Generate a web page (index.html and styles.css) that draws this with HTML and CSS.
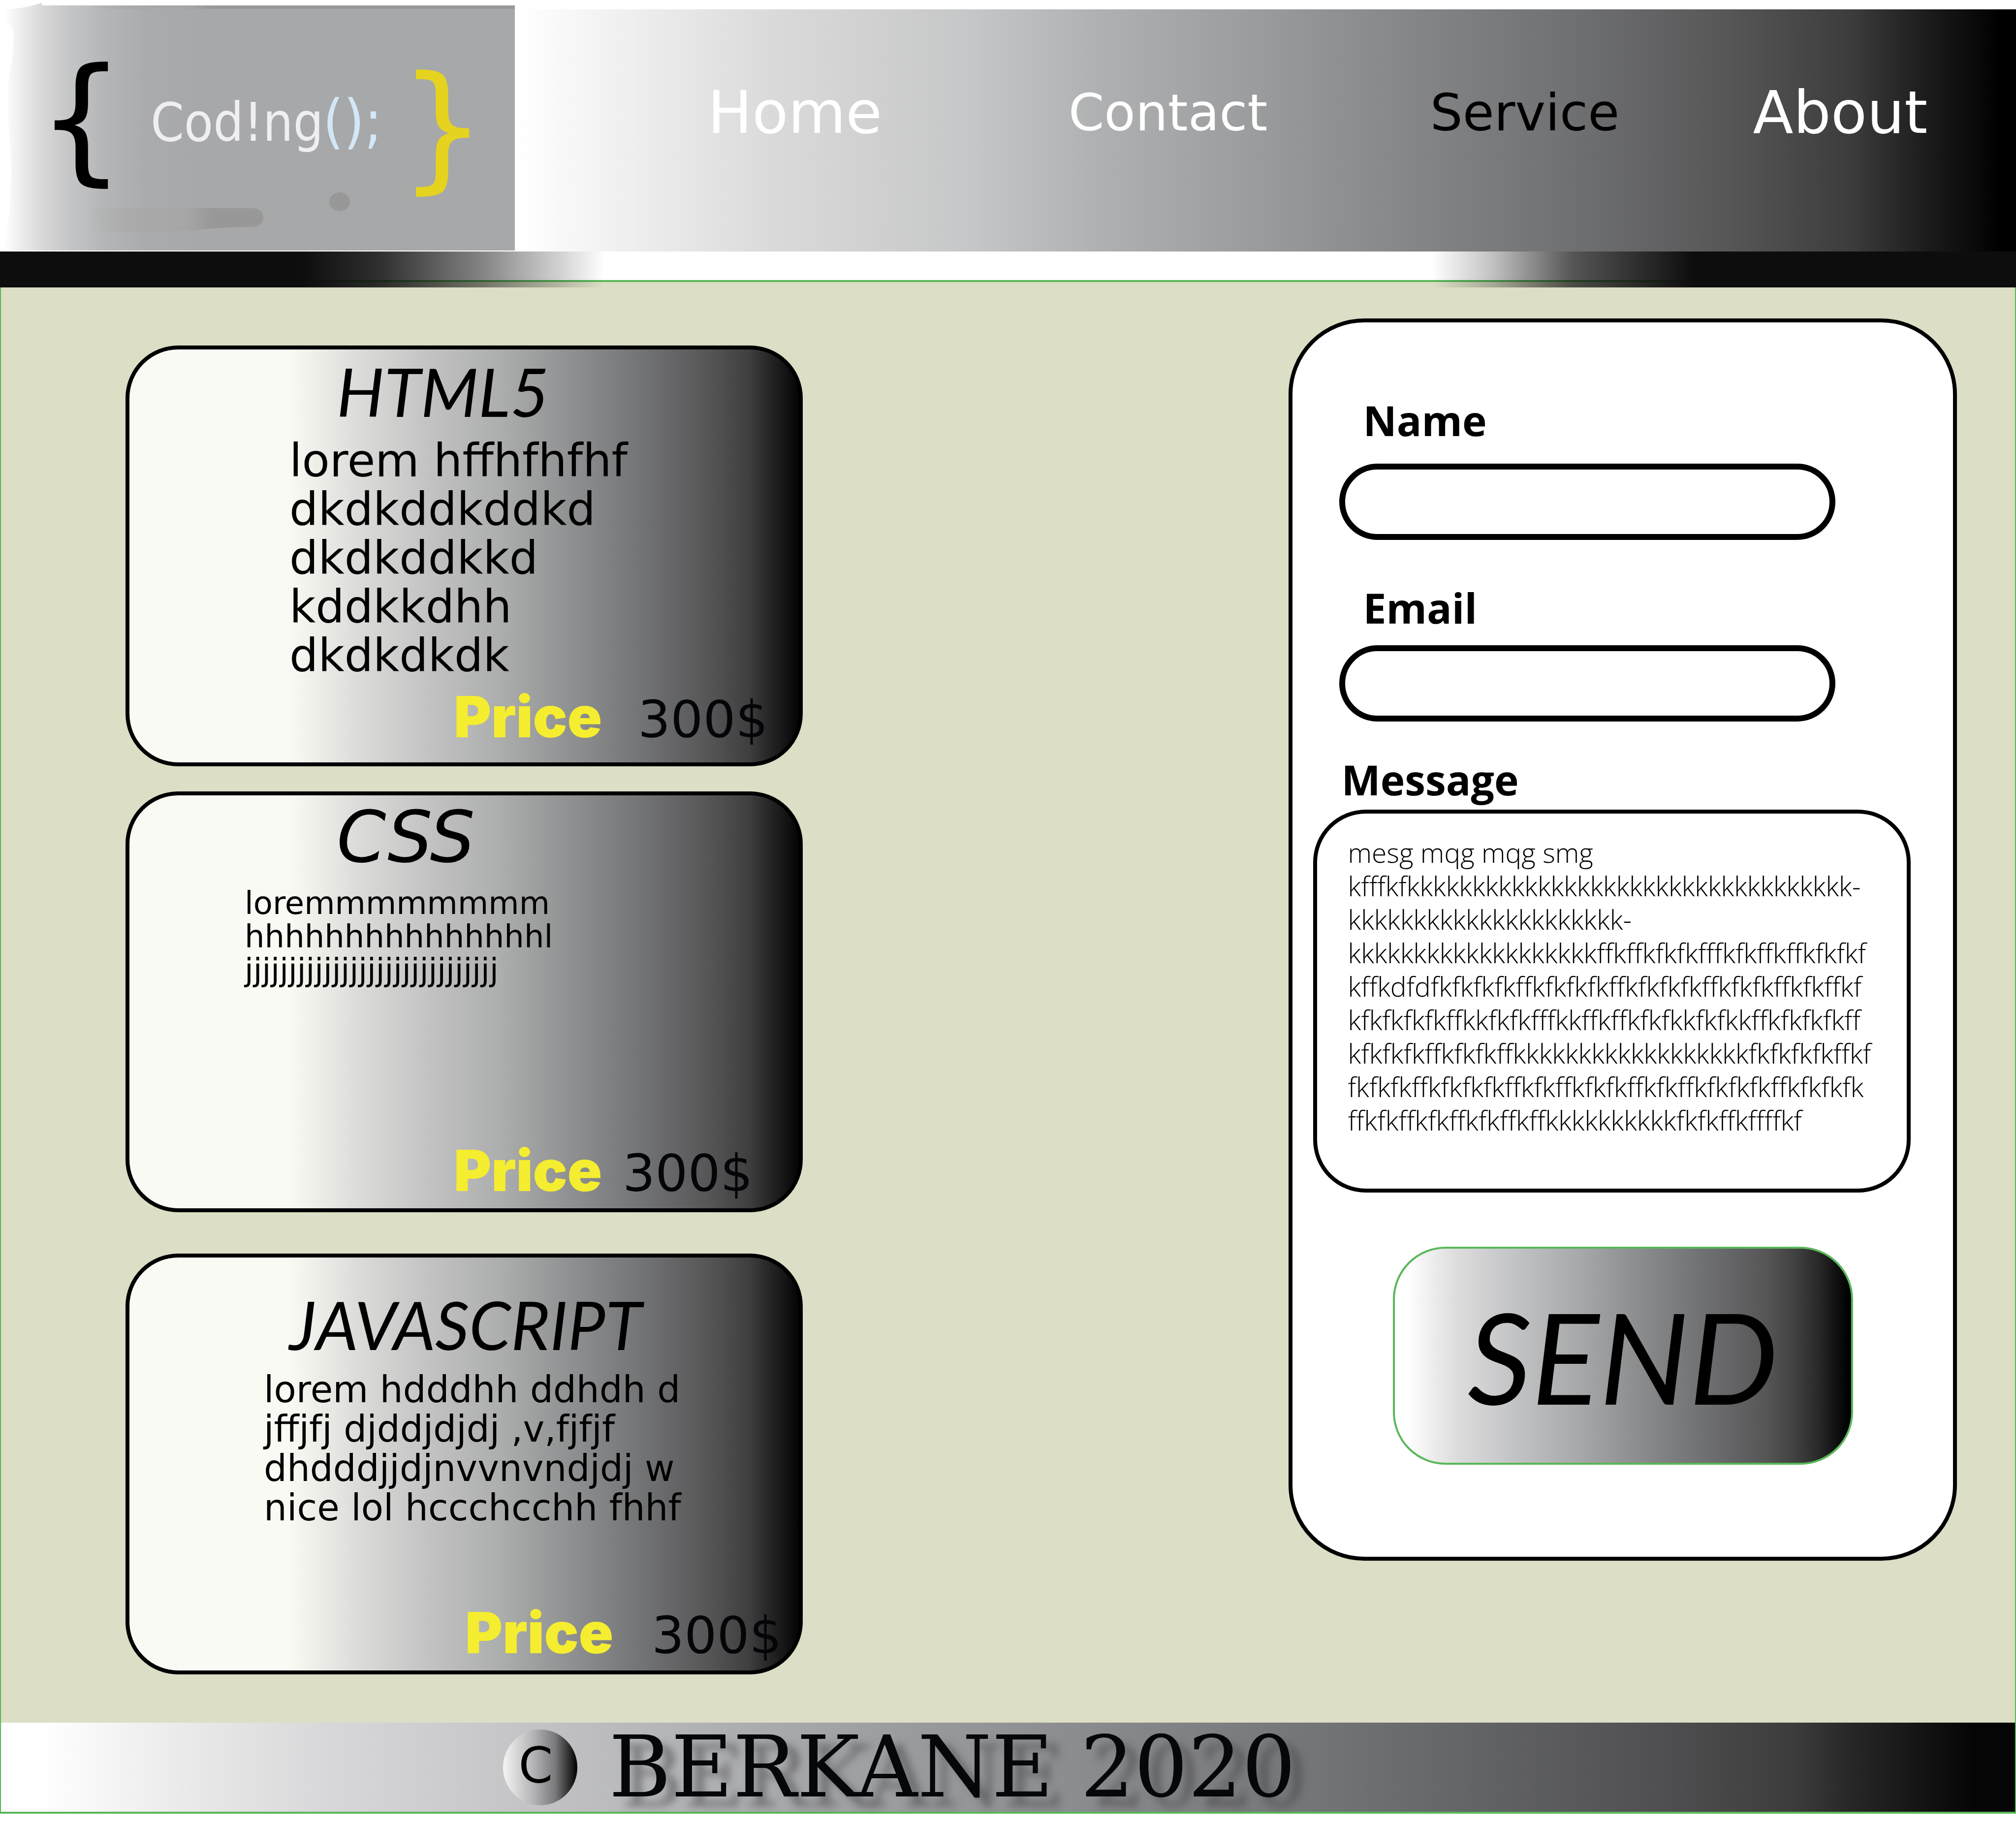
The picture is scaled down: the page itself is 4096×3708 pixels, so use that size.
FILE: index.html
```html
<!DOCTYPE html>
<html lang="en">
<head>
<meta charset="utf-8">
<title>Coding courses</title>
<link rel="stylesheet" href="styles.css">
</head>
<body>
<header class="header">
  <a class="logo" href="#">
    <svg class="logo-art" viewBox="0 0 1050 514" role="img" aria-label="Coding">
      <defs>
        <linearGradient id="panel" x1="8" x2="1046" y1="0" y2="0" gradientUnits="userSpaceOnUse">
          <stop offset="0" stop-color="#fff"/>
          <stop offset=".03" stop-color="#eee"/>
          <stop offset=".08" stop-color="#d6d6d7"/>
          <stop offset=".13" stop-color="#c4c5c6"/>
          <stop offset=".2" stop-color="#b4b5b6"/>
          <stop offset=".28" stop-color="#aaabad"/>
          <stop offset=".38" stop-color="#a6a8a9"/>
          <stop offset="1" stop-color="#a6a8a9"/>
        </linearGradient>
        <linearGradient id="smear" x1="180" x2="430" y1="0" y2="0" gradientUnits="userSpaceOnUse">
          <stop offset="0" stop-color="#a9a9a9" stop-opacity="0"/>
          <stop offset=".5" stop-color="#a8a8a8"/>
          <stop offset=".8" stop-color="#a6a6a6"/>
          <stop offset="1" stop-color="#989898"/>
        </linearGradient>
      </defs>
      <path class="sheet" d="M0 18H1050V514H0Z"/>
      <path fill="url(#panel)" d="M8 20Q45 18 85 6V11H1046V509H8Q24 420 23 330Q14 240 17 160Q30 110 27 60Q24 52 8 42Z"/>
      <path fill="url(#smear)" d="M180 11H1046V18H180Z"/>
      <path fill="url(#smear)" d="M180 423H515A20 19 0 0 1 515 461Q450 462 400 467Q300 476 180 470Z"/>
      <ellipse class="dot" cx="690" cy="410" rx="21" ry="19"/>
      <text class="brace" x="76" y="338">{</text>
      <text class="word" x="306" y="286">Cod!ng</text>
      <text class="call" x="656" y="288">();</text>
      <text class="brace brace-close" x="810" y="354">}</text>
    </svg>
  </a>
  <nav class="nav">
    <a class="nav-link nav-wide" href="#">Home</a>
    <a class="nav-link" href="#">Contact</a>
    <a class="nav-link nav-current" href="#">Service</a>
    <a class="nav-link nav-wide" href="#">About</a>
  </nav>
</header>
<div class="band"></div>
<div class="page">
  <main class="content">
    <section class="cards">
      <article class="card card-html">
        <h2 class="card-title">HTML5</h2>
        <p class="card-text">lorem hffhfhfhf<br>dkdkddkddkd<br>dkdkddkkd<br>kddkkdhh<br>dkdkdkdk</p>
        <p class="price"><span class="price-label">Price</span><span class="price-value">300$</span></p>
      </article>
      <article class="card card-css">
        <h2 class="card-title">CSS</h2>
        <p class="card-text">loremmmmmmmm<br>hhhhhhhhhhhhhhhl<br>jjjjjjjjjjjjjjjjjjjjjjjjjjjjj</p>
        <p class="price"><span class="price-label">Price</span><span class="price-value">300$</span></p>
      </article>
      <article class="card card-js">
        <h2 class="card-title">JAVASCRIPT</h2>
        <p class="card-text">lorem hdddhh ddhdh d<br>jffjfj djddjdjdj ,v,fjfjf<br>dhdddjjdjnvvnvndjdj w<br>nice lol hccchcchh fhhf</p>
        <p class="price"><span class="price-label">Price</span><span class="price-value">300$</span></p>
      </article>
    </section>
    <form class="form">
      <label class="label" for="name">Name</label>
      <input class="field" id="name" type="text">
      <label class="label" for="email">Email</label>
      <input class="field field-email" id="email" type="email">
      <label class="label label-message" for="message">Message</label>
      <textarea class="message" id="message" spellcheck="false">mesg mqg mqg smg
kfffkfkkkkkkkkkkkkkkkkkkkkkkkkkkkkkkkkkk-
kkkkkkkkkkkkkkkkkkkkk-
kkkkkkkkkkkkkkkkkkkffkffkfkfkfffkfkffkffkfkfkf
kffkdfdfkfkfkfkffkfkfkfkffkfkfkfkffkfkfkffkfkffkf
kfkfkfkfkffkkfkfkfffkkffkffkfkfkkfkfkkffkfkfkfkff
kfkfkfkffkfkfkffkkkkkkkkkkkkkkkkkkfkfkfkfkffkf
fkfkfkffkfkfkfkffkfkffkfkfkffkfkffkfkfkfkffkfkfkfk
ffkfkffkfkffkfkffkffkkkkkkkkkkfkfkffkffffkf</textarea>
      <button class="send" type="button">SEND</button>
    </form>
  </main>
  <footer class="footer">
    <span class="badge">C</span>
    <span class="owner">BERKANE 2020</span>
  </footer>
</div>
</body>
</html>
```
FILE: styles.css
```css
* { box-sizing: border-box; }

body {
  margin: 0;
  background: #fff;
  color: #000;
  font-family: "DejaVu Sans", sans-serif;
}

h2, p { margin: 0; }

/* header */
.header {
  display: grid;
  grid-template-columns: 1050fr 3046fr;
  align-items: start;
}

.logo { display: block; }
.logo-art { display: block; width: 100%; margin-bottom: -3px; }
.sheet { fill: #fff; }
.dot { fill: #989898; }
.brace { font: 280px "DejaVu Sans", sans-serif; fill: #000; }
.brace-close { fill: #e5d31f; }
.word { font: 108px "DejaVu Sans Condensed", "DejaVu Sans", sans-serif; fill: #efeff1; }
.call { font: 120px "DejaVu Sans Condensed", "DejaVu Sans", sans-serif; fill: #d3e7f6; }

.nav {
  display: grid;
  grid-template-columns: 930fr 586fr 864fr 418fr;
  align-items: center;
  height: 492px;
  margin-top: 19px;
  padding: 0 148px 72px 100px;
  background: linear-gradient(90deg, #fff 0%, #dadada 17%, #c6c7c8 30%, #afb0b2 39%, #999a9b 50%, #828385 61%, #707173 70%, #565657 81%, #3c3c3c 89%, #1c1c1c 94%, #000 99%);
}

.nav-link {
  color: #fff;
  font-size: 104px;
  line-height: 120px;
  text-align: center;
  text-decoration: none;
}
.nav-wide { font-size: 120px; }
.nav-current { color: #000; }

.band {
  position: relative;
  z-index: 1;
  height: 73px;
  margin-bottom: -15px;
  background: linear-gradient(90deg, #0d0d0d 15%, #0d0d0dd9 19%, #0d0d0d80 24%, #0d0d0d40 27%, #0d0d0d00 30%, #0d0d0d00 71%, #0d0d0d40 74%, #0d0d0db3 78%, #0d0d0d 84%);
}

/* page body */
.page {
  margin-bottom: 22px;
  border: 3px solid #59b85a;
  border-width: 4px 2px;
}

.content {
  display: grid;
  grid-template-columns: 1376fr 1358fr;
  column-gap: 26.5%;
  align-items: start;
  padding: 74px 118px 98px 253px;
  background: #dcdec5;
}

.cards {
  display: grid;
  gap: 51px;
  padding-top: 55px;
}

.card {
  display: flex;
  flex-direction: column;
  min-height: 855px;
  padding: 21px 0 23px;
  border: 8px solid #000;
  border-radius: 107px;
  background: linear-gradient(90deg, #fafaf4 24%, #f2f2ec 27%, #dcdcda 34%, #c2c2c2 45%, #adaeae 55%, #919293 65%, #737476 76%, #565657 86%, #3f3f40 92%, #262626 95%, #000 100%) border-box;
}

.card-title {
  padding-left: 421px;
  font: italic 400 136px/128px Lato, sans-serif;
}

.card-text { white-space: nowrap; }

.price {
  display: flex;
  align-items: baseline;
  gap: 73px;
  margin-top: auto;
  padding-left: 659px;
  white-space: nowrap;
  line-height: 96px;
}
.price-label {
  color: #f5ed2f;
  font-family: Inter, sans-serif;
  font-size: 116px;
  font-weight: 900;
}
.price-value { color: #040508; font-size: 104px; }

.card-html { padding-bottom: 39px; }
.card-html .card-text {
  margin-top: 28px;
  padding-left: 325px;
  font-size: 92px;
  line-height: 99px;
}

.card-css .card-title { font-family: "DejaVu Sans", sans-serif; font-size: 144px; }
.card-css .card-text {
  margin-top: 36px;
  padding-left: 234px;
  font-size: 64px;
  line-height: 68px;
}
.card-css .price { gap: 42px; }

.card-js { margin-top: 33px; padding-top: 72px; }
.card-js .card-title { padding-left: 325px; }
.card-js .card-text {
  margin-top: 28px;
  padding-left: 273px;
  font-size: 74px;
  line-height: 80px;
}
.card-js .price { gap: 78px; padding-left: 682px; }

/* contact form */
.form {
  display: flex;
  flex-direction: column;
  padding: 151px 86px 187px 42px;
  border: 8px solid #000;
  border-radius: 154px;
  background: #fff;
}

.label {
  padding-left: 102px;
  font: 700 84px/96px "Open Sans", sans-serif;
}
.label-message { padding-left: 58px; }

.field {
  width: 83%;
  height: 155px;
  margin: 40px 0 90px 53px;
  padding: 0 60px;
  border: 12px solid #000;
  border-radius: 78px;
  background: #fff;
  font: 56px "Open Sans", sans-serif;
}
.field-email { margin: 28px 0 70px 53px; }

.message {
  height: 778px;
  margin-top: 13px;
  padding: 45px 0 0 63px;
  border: 8px solid #000;
  border-radius: 107px;
  background: #fff;
  color: #000;
  font: 300 55px/68px "Open Sans", sans-serif;
  font-variant-ligatures: none;
  white-space: pre;
  overflow: hidden;
  resize: none;
}

.send {
  width: 77%;
  height: 443px;
  margin: 110px 0 0 162px;
  padding: 0;
  border: 4px solid #59b85a;
  border-radius: 107px;
  background: linear-gradient(90deg, #fff 3%, #dcdcdd 14%, #c3c4c5 26%, #a8a9aa 40%, #8c8d8e 53%, #707173 67%, #565657 81%, #424243 87%, #2b2b2b 92%, #000 99%) border-box;
  color: #000;
  font: italic 400 256px/256px Lato, sans-serif;
}

/* footer */
.footer {
  display: flex;
  align-items: center;
  gap: 64px;
  height: 181px;
  padding-left: 1020px;
  background: linear-gradient(90deg, #fff 2%, #eaeaea 9%, #d8d8da 16%, #c6c6c9 25%, #b0b1b3 35%, #9a9b9d 45%, #8a8b8e 54%, #767779 64%, #636466 73%, #4e4e50 83%, #3c3c3c 89%, #262626 92%, #050505 98%);
}

.badge {
  width: 151px;
  height: 154px;
  padding-right: 18px;
  border-radius: 50%;
  background: linear-gradient(90deg, #f4f4f4, #b5b5b7 40%, #7a7a7c 70%, #000);
  font-size: 100px;
  line-height: 148px;
  text-align: center;
}

.owner {
  color: #040808;
  font: 172px/180px "DejaVu Serif", serif;
  text-shadow: 24px 20px 16px #4448;
  white-space: nowrap;
}
```
